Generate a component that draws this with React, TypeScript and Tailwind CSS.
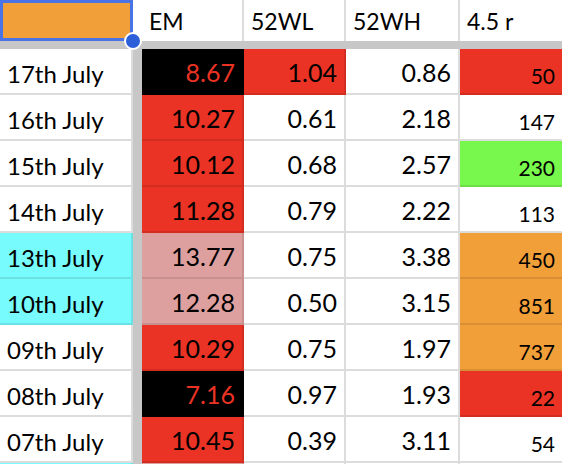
const RED = "bg-[#ea3324]";
const BLACK = "bg-black";
const PINK = "bg-[#dea09e]";
const CYAN = "bg-[#78fbfd]";
const ORANGE = "bg-[#f19f39]";
const GREEN = "bg-[#78f84c]";

type Row = {
  date: string;
  dateBg?: string;
  em: string;
  emBg?: string;
  emRed?: boolean;
  wl: string;
  wlBg?: string;
  wh: string;
  r: string;
  rBg?: string;
};

const rows: Row[] = [
  { date: "17th July", em: "8.67", emBg: BLACK, emRed: true, wl: "1.04", wlBg: RED, wh: "0.86", r: "50", rBg: RED },
  { date: "16th July", em: "10.27", emBg: RED, wl: "0.61", wh: "2.18", r: "147" },
  { date: "15th July", em: "10.12", emBg: RED, wl: "0.68", wh: "2.57", r: "230", rBg: GREEN },
  { date: "14th July", em: "11.28", emBg: RED, wl: "0.79", wh: "2.22", r: "113" },
  { date: "13th July", dateBg: CYAN, em: "13.77", emBg: PINK, wl: "0.75", wh: "3.38", r: "450", rBg: ORANGE },
  { date: "10th July", dateBg: CYAN, em: "12.28", emBg: PINK, wl: "0.50", wh: "3.15", r: "851", rBg: ORANGE },
  { date: "09th July", em: "10.29", emBg: RED, wl: "0.75", wh: "1.97", r: "737", rBg: ORANGE },
  { date: "08th July", em: "7.16", emBg: BLACK, emRed: true, wl: "0.97", wh: "1.93", r: "22", rBg: RED },
  { date: "07th July", em: "10.45", emBg: RED, wl: "0.39", wh: "3.11", r: "54" },
  // next row, only its top edge is in view
  { date: "", dateBg: CYAN, em: "", emBg: PINK, wl: "", wh: "", r: "" },
];

function Cell({
  text,
  bg,
  small,
  redText,
  last,
}: {
  text: string;
  bg?: string;
  small?: boolean;
  redText?: boolean;
  last?: boolean;
}) {
  const border = bg ? "border-black/10" : "border-[#dcdcdc]";
  return (
    <div
      className={`flex h-[46px] items-end justify-end border-b-2 pr-[7px] leading-none ${last ? "" : "border-r-2"} ${border} ${
        bg ?? "bg-white"
      } ${small ? "pb-[7px] text-[21px]" : "pb-[8px] text-[25px]"} ${redText ? "text-[#ea3324]" : "text-black"}`}
    >
      {text}
    </div>
  );
}

export default function App() {
  return (
    <div
      className="relative h-[464px] w-[562px] overflow-hidden bg-white"
      style={{ fontFamily: "Lato, 'Open Sans', sans-serif" }}
    >
      <div className="grid grid-cols-[133px_9px_102px_102px_114px_102px]">
        {/* header */}
        <div className="h-[41px] border-[3px] border-[#4a74e6] bg-[#f19f39]" />
        <div className="h-[41px] bg-white" />
        {["EM", "52WL", "52WH", "4.5 r"].map((h, i) => (
          <div
            key={h}
            className={`flex h-[41px] items-center pl-[7px] pt-[1px] text-[23px] leading-none text-black ${
              i < 3 ? "border-r-2 border-[#dcdcdc]" : ""
            }`}
          >
            {h}
          </div>
        ))}

        {/* frozen pane bar */}
        <div className="col-span-6 h-[8px] bg-[#c7c7c7]" />

        {rows.map((r, idx) => (
          <div key={idx} className="contents">
            <div
              className={`flex h-[46px] items-end border-b-2 border-r-2 pb-[7px] pl-[7px] text-[24px] leading-none text-black ${
                r.dateBg ? `${r.dateBg} border-black/10` : "border-[#dcdcdc] bg-white"
              }`}
            >
              {r.date}
            </div>
            <div className="h-[46px] bg-[#c7c7c7]" />
            <Cell text={r.em} bg={r.emBg} redText={r.emRed} />
            <Cell text={r.wl} bg={r.wlBg} />
            <Cell text={r.wh} />
            <Cell text={r.r} bg={r.rBg} small last />
          </div>
        ))}
      </div>

      {/* selection handle */}
      <div className="absolute left-[124px] top-[32px] h-[18px] w-[18px] rounded-full border-2 border-white bg-[#2c5fd8]" />
    </div>
  );
}
